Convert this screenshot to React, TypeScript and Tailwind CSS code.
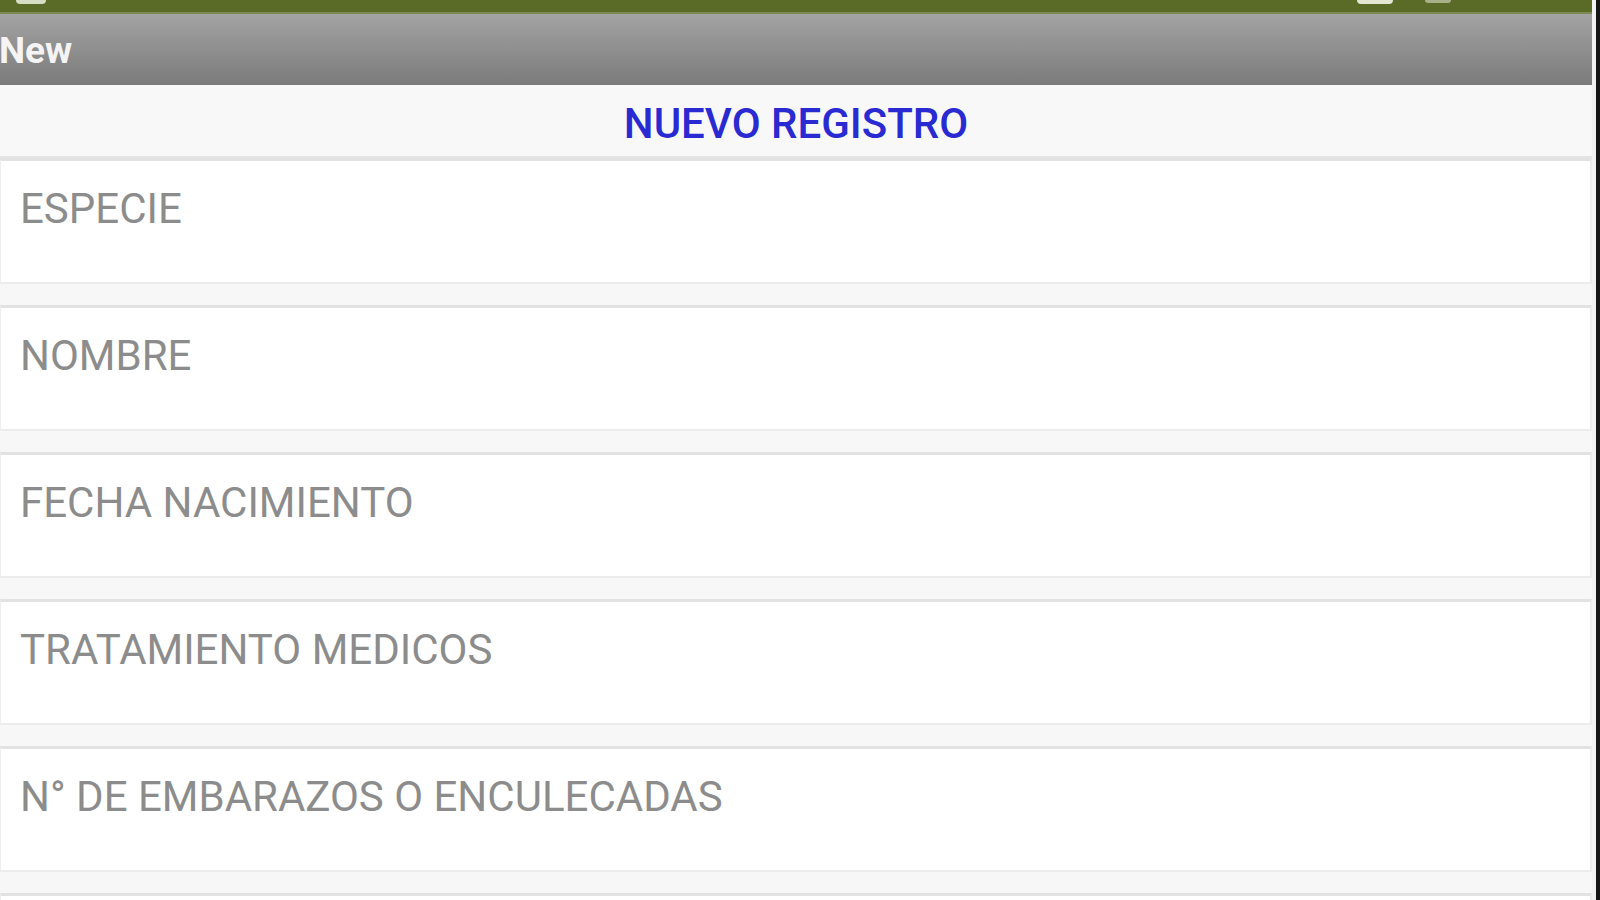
const fields = [
  "ESPECIE",
  "NOMBRE",
  "FECHA NACIMIENTO",
  "TRATAMIENTO MEDICOS",
  "N° DE EMBARAZOS O ENCULECADAS",
  "",
];

function Field({ label }: { label: string }) {
  return (
    <div className="shrink-0 bg-[#f7f7f7] pb-[21px]">
      <div className="h-[126px] border-t-[3px] border-l border-r-2 border-b-2 border-t-[#e2e2e2] border-l-[#eeeeee] border-r-[#ececec] border-b-[#ececec] bg-white pl-[19px] pt-[24px]">
        <span className="text-[42px] leading-[48px] text-[#8c8c8c]">{label}</span>
      </div>
    </div>
  );
}

export default function App() {
  return (
    <div className="flex h-[900px] w-[1600px] overflow-hidden bg-[#f7f7f7] font-['Roboto',sans-serif]">
      <div className="flex flex-1 flex-col">
        <div className="relative h-[14px] shrink-0 bg-[#596b26]">
          <div className="absolute left-[16px] top-0 h-[4px] w-[30px] rounded-b bg-[#d7dcc4]" />
          <div className="absolute left-[1357px] top-0 h-[4px] w-[36px] rounded-b bg-[#e3e6d2]" />
          <div className="absolute left-[1425px] top-0 h-[3px] w-[26px] rounded-b bg-[#a8b08a]" />
          <div className="absolute bottom-0 left-0 right-0 h-[2px] bg-[#7d8a55]" />
        </div>
        <div className="flex h-[71px] shrink-0 items-center bg-gradient-to-b from-[#a3a3a3] to-[#7b7b7b] pt-[3px]">
          <span className="-ml-[1px] text-[37px] font-bold text-[#f4f4f4]">New</span>
        </div>
        <div className="flex h-[73px] shrink-0 items-center justify-center border-b-2 border-[#e4e4e4] bg-[#f8f8f8] pt-[5px]">
          <span className="text-[42px] font-medium text-[#2a2ad2]">NUEVO REGISTRO</span>
        </div>
        <div className="flex flex-col">
          {fields.map((f, i) => (
            <Field key={i} label={f} />
          ))}
        </div>
      </div>
      <div className="w-[4px] bg-[#f2f2f2]" />
      <div className="w-[4px] bg-[#151515]" />
    </div>
  );
}
